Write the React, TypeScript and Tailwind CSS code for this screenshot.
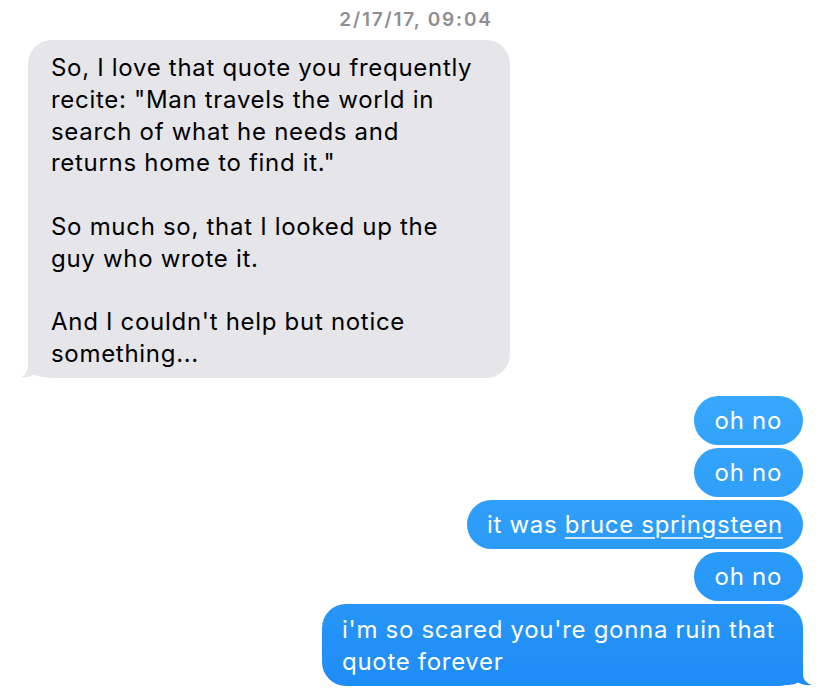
import React from "react";

const font = { fontFamily: "Inter, 'Noto Sans', sans-serif" };

function GrayTail() {
  return (
    <svg className="absolute left-[-7px] bottom-0" width="24" height="22" viewBox="0 0 24 22">
      <path d="M7 0 V10 C7 15 4.5 18.5 0.5 21 C5 21.5 10 20.5 13 18.5 C15.5 20 18.5 21 24 21 V0 Z" fill="#e5e5ea" />
    </svg>
  );
}

function BlueTail() {
  return (
    <svg className="absolute right-[-9px] bottom-0" width="26" height="22" viewBox="0 0 26 22">
      <path d="M17 0 V10 C17 15 19.5 18.5 25.5 21 C21 21.5 15 20.5 12 18.5 C9.5 20 6.5 21 0 21 V0 Z" fill="#1e8cf6" />
    </svg>
  );
}

export default function App() {
  return (
    <div className="w-[820px] h-[698px] bg-white overflow-hidden text-[24px] leading-[31.8px] tracking-[0.7px]" style={font}>
      <div className="pt-[8px] text-center text-[19px] leading-[24px] font-semibold tracking-[1.8px] text-[#8e8e93] pl-[12px]">
        2/17/17, 09:04
      </div>
      <div className="mt-[8px] ml-[28px] relative w-[482px]">
        <GrayTail />
        <div className="relative bg-[#e5e5ea] rounded-[24px] pl-[23px] pr-[10px] pt-[12px] pb-[8px] text-black whitespace-nowrap">
          <p>
            So, I love that quote you frequently
            <br />
            recite: "Man travels the world in
            <br />
            search of what he needs and
            <br />
            returns home to find it."
          </p>
          <p className="mt-[31.8px]">
            So much so, that I looked up the
            <br />
            guy who wrote it.
          </p>
          <p className="mt-[31.8px]">
            And I couldn't help but notice
            <br />
            something...
          </p>
        </div>
      </div>
      <div className="mt-[18px] pr-[17px] flex flex-col items-end gap-[3px] text-white whitespace-nowrap">
        <div className="h-[49px] rounded-[25px] px-[21px] flex items-center bg-gradient-to-b from-[#37a8fc] to-[#33a3fb]">oh no</div>
        <div className="h-[49px] rounded-[25px] px-[21px] flex items-center bg-gradient-to-b from-[#33a3fb] to-[#2f9ffa]">oh no</div>
        <div className="h-[49px] rounded-[25px] px-[20px] flex items-center bg-gradient-to-b from-[#2f9ffa] to-[#2b9bf9]">
          <span>
            it was{" "}
            <span className="underline decoration-[1.5px] underline-offset-[4px] decoration-[#cfe6fd]">bruce springsteen</span>
          </span>
        </div>
        <div className="h-[49px] rounded-[25px] px-[21px] flex items-center bg-gradient-to-b from-[#2b9bf9] to-[#2897f8]">oh no</div>
        <div className="relative w-[481px]">
          <BlueTail />
          <div className="relative rounded-[24px] pl-[20px] pr-[10px] pt-[10px] pb-[8px] bg-gradient-to-b from-[#2796f8] to-[#1e8cf6]">
            i'm so scared you're gonna ruin that
            <br />
            quote forever
          </div>
        </div>
      </div>
    </div>
  );
}
